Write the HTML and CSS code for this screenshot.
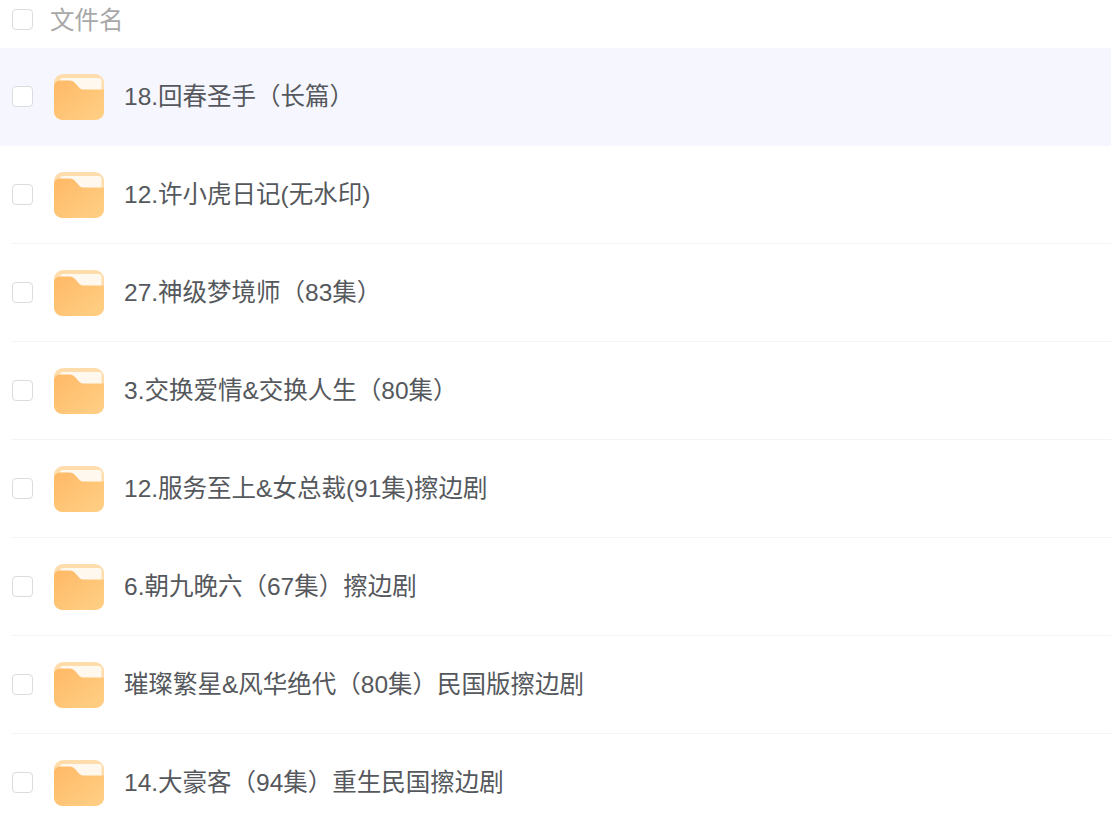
FILE: index.html
```html
<!DOCTYPE html>
<html lang="zh-CN">
<head>
<meta charset="utf-8">
<title>文件列表</title>
<link rel="stylesheet" href="styles.css">
</head>
<body>
<svg class="defs" width="0" height="0" aria-hidden="true">
  <symbol id="folder" viewBox="0 0 50 46">
    <rect x="0" y="0" width="50" height="46" rx="9" fill="#fedcab"/>
    <path d="M5 9C5 5.800 7 4 10 4H45c1.500 0 2.500 1 2.500 2.500V18H5z" fill="#fff8ee"/>
    <path d="M0 13c0-4 2.500-6.500 6.500-6.500H15c3 0 4.800 1 6.500 3l3.500 4c1.400 1.500 2.600 2 5 2H50v21.500c0 5.500-3.500 9-9 9H9c-5.500 0-9-3.500-9-9z" fill="url(#folderFill)"/>
  </symbol>
  <defs>
    <linearGradient id="folderFill" x1="0" y1="0" x2="1" y2="1">
      <stop offset="0" stop-color="#ffb966"/>
      <stop offset="1" stop-color="#ffd086"/>
    </linearGradient>
  </defs>
</svg>
<main class="file-list">
  <div class="header">
    <span class="check"></span>
    <span class="header-name">文件名</span>
  </div>
  <div class="row row-active"><span class="check"></span><svg class="folder"><use href="#folder"/></svg><span class="name">18.回春圣手（长篇）</span></div>
  <div class="row"><span class="check"></span><svg class="folder"><use href="#folder"/></svg><span class="name">12.许小虎日记(无水印)</span></div>
  <div class="row"><span class="check"></span><svg class="folder"><use href="#folder"/></svg><span class="name">27.神级梦境师（83集）</span></div>
  <div class="row"><span class="check"></span><svg class="folder"><use href="#folder"/></svg><span class="name">3.交换爱情&amp;交换人生（80集）</span></div>
  <div class="row"><span class="check"></span><svg class="folder"><use href="#folder"/></svg><span class="name">12.服务至上&amp;女总裁(91集)擦边剧</span></div>
  <div class="row"><span class="check"></span><svg class="folder"><use href="#folder"/></svg><span class="name">6.朝九晚六（67集）擦边剧</span></div>
  <div class="row"><span class="check"></span><svg class="folder"><use href="#folder"/></svg><span class="name">璀璨繁星&amp;风华绝代（80集）民国版擦边剧</span></div>
  <div class="row"><span class="check"></span><svg class="folder"><use href="#folder"/></svg><span class="name">14.大豪客（94集）重生民国擦边剧</span></div>
</main>
</body>
</html>
```
FILE: styles.css
```css
html, body {
  margin: 0;
  height: 100%;
  overflow: hidden;
  background: #fff;
  font-family: "Liberation Sans", "Noto Sans CJK SC", sans-serif;
}
.defs { position: absolute; }
.file-list { display: flex; flex-direction: column; }
.header {
  display: flex;
  align-items: center;
  height: 48px;
  padding: 0 0 6px 12px;
  box-sizing: border-box;
  gap: 17px;
}
.header .check { margin-bottom: 3px; }
.header-name { font-size: 24.5px; line-height: 40px; color: #a8a8a8; }
.check {
  flex: none;
  width: 21px;
  height: 21px;
  box-sizing: border-box;
  background: #fff;
  border: 1px solid #dcdcdf;
  border-radius: 4px;
}
.row {
  position: relative;
  display: flex;
  align-items: center;
  height: 98px;
  padding-left: 12px;
  box-sizing: border-box;
}
.row .check { margin-bottom: 1px; }
.row::after {
  content: "";
  position: absolute;
  left: 11px;
  right: 0;
  bottom: 0;
  height: 1px;
  background: #f3f3f4;
}
.row-active { background: #f6f7fe; }
.row-active::after { display: none; }
.folder { flex: none; width: 50px; height: 46px; margin-left: 21px; }
.name {
  margin-left: 20px;
  font-size: 24.5px;
  line-height: 40px;
  color: #55585c;
  white-space: nowrap;
}
```
